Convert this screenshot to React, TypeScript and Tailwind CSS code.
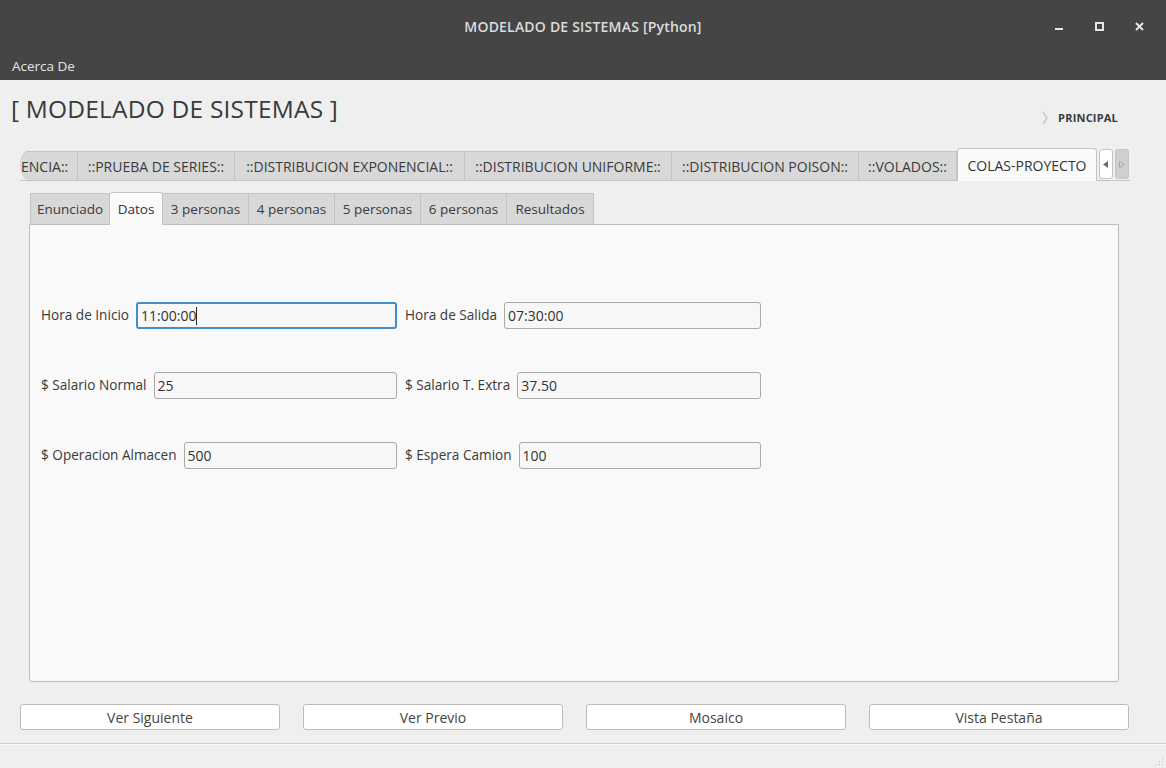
import React from 'react';

const outerTabs = [
  { label: '::PRUEBA DE SERIES::', w: 157 },
  { label: '::DISTRIBUCION EXPONENCIAL::', w: 230 },
  { label: '::DISTRIBUCION UNIFORME::', w: 207 },
  { label: '::DISTRIBUCION POISON::', w: 187 },
  { label: '::VOLADOS::', w: 98 },
];

const innerTabs = [
  { label: 'Enunciado', w: 80 },
  { label: 'Datos', w: 53, active: true },
  { label: '3 personas', w: 86 },
  { label: '4 personas', w: 86 },
  { label: '5 personas', w: 86 },
  { label: '6 personas', w: 86 },
  { label: 'Resultados', w: 87 },
];

const rows = [
  [
    { label: 'Hora de Inicio', value: '11:00:00', focus: true },
    { label: 'Hora de Salida', value: '07:30:00' },
  ],
  [
    { label: '$ Salario Normal', value: '25' },
    { label: '$ Salario T. Extra', value: '37.50' },
  ],
  [
    { label: '$ Operacion Almacen', value: '500' },
    { label: '$ Espera Camion', value: '100' },
  ],
];

const buttons = ['Ver Siguiente', 'Ver Previo', 'Mosaico', 'Vista Pestaña'];

const Field = ({ label, value, focus }: { label: string; value: string; focus?: boolean }) => (
  <div className="flex items-center gap-[7px] w-[356px]">
    <span className="text-[13.6px] text-[#3a3a3a] whitespace-nowrap">{label}</span>
    <div
      className={
        'flex-1 h-[27px] rounded-[3px] bg-[#f7f7f7] flex items-center pl-[3px] text-[14px] text-[#333] ' +
        (focus ? 'border-2 border-[#3d8ec9] pl-[2px]' : 'border border-[#a9a9a9]')
      }
    >
      <span>{value}</span>
      {focus && <span className="w-px h-[18px] bg-[#222]" />}
    </div>
  </div>
);

export default function App() {
  return (
    <div className="w-[1166px] h-[768px] flex flex-col bg-[#efefef] font-['Open_Sans','Noto_Sans',sans-serif] overflow-hidden">
      {/* title bar */}
      <div className="h-[50px] bg-[#454545] relative flex items-center justify-center pt-[3px]">
        <span className="text-[14px] font-semibold text-[#dcdcdc] tracking-[0.2px]">MODELADO DE SISTEMAS [Python]</span>
        <div className="absolute right-[22px] top-0 h-[50px] pt-[2px] flex items-center gap-[31px]">
          <svg width="9" height="9" viewBox="0 0 9 9"><rect x="0" y="6" width="8" height="2" fill="#e6e6e6" /></svg>
          <svg width="9" height="9" viewBox="0 0 9 9"><rect x="1" y="1" width="7" height="7" fill="none" stroke="#e6e6e6" strokeWidth="2" /></svg>
          <svg width="9" height="9" viewBox="0 0 9 9"><path d="M1 1 L8 8 M8 1 L1 8" stroke="#e6e6e6" strokeWidth="2" /></svg>
        </div>
      </div>
      {/* menu bar */}
      <div className="h-[30px] bg-[#454545] flex items-center px-[12px] pt-[3px] text-[13.5px] text-[#e6e6e6]">Acerca De</div>

      {/* header */}
      <div className="h-[69px] flex justify-between items-start pl-[11px] pr-[48px]">
        <h1 className="mt-[13px] text-[24.5px] leading-[32px] text-[#3a3a3a] tracking-[0.2px]">[ MODELADO DE SISTEMAS ]</h1>
        <div className="mt-[30px] flex items-center gap-[10px]">
          <svg width="6" height="14" viewBox="0 0 6 14"><path d="M1 1 L5 7 L1 13" fill="none" stroke="#bdbdbd" strokeWidth="1.2" /></svg>
          <span className="text-[11px] font-bold text-[#3a3a3a] tracking-[0.2px]">PRINCIPAL</span>
        </div>
      </div>

      {/* outer tab bar */}
      <div className="ml-[20px] w-[1110px] h-[32px] flex items-end border-b border-[#c4c4c4]">
        <div className="h-[29px] w-[58px] bg-[#d8d8d8] border-t border-r border-[#c4c4c4] rounded-l-[8px_15px] flex items-center pl-[1px] text-[14px] text-[#3a3a3a] overflow-hidden whitespace-nowrap">ENCIA::</div>
        {outerTabs.map((t) => (
          <div
            key={t.label}
            style={{ width: t.w }}
            className="h-[29px] bg-[#d8d8d8] border-t border-r border-[#c4c4c4] flex items-center justify-center text-[14px] text-[#3a3a3a] whitespace-nowrap"
          >
            {t.label}
          </div>
        ))}
        <div className="h-[33px] w-[140px] -mb-px bg-[#fafafa] border border-b-0 border-[#c4c4c4] rounded-t-[3px] flex items-center justify-center text-[14px] text-[#333] whitespace-nowrap">
          COLAS-PROYECTO
        </div>
        <div className="ml-[2px] mb-[1px] h-[30px] w-[14px] bg-white border border-[#c4c4c4] rounded-[3px] flex items-center justify-center">
          <svg width="6" height="7" viewBox="0 0 6 7"><path d="M5 0 L0 3.5 L5 7 Z" fill="#6a6a6a" /></svg>
        </div>
        <div className="ml-[2px] mb-[1px] h-[30px] w-[14px] bg-[#cfcfcf] border border-[#c4c4c4] rounded-[3px] flex items-center justify-center">
          <svg width="6" height="7" viewBox="0 0 6 7"><path d="M0.5 0.5 L5.5 3.5 L0.5 6.5 Z" fill="none" stroke="#a8a8a8" /></svg>
        </div>
      </div>

      {/* inner tabs + panel */}
      <div className="pl-[29px] pr-[47px] pt-[11px] flex flex-col">
        <div className="h-[32px] flex items-end pl-px">
          {innerTabs.map((t, i) => (
            <div
              key={t.label}
              style={{ width: t.w }}
              className={
                'flex items-center justify-center text-[13.5px] whitespace-nowrap border-t border-r border-[#c4c4c4] ' +
                (i === 0 ? 'border-l ' : '') +
                (t.active
                  ? 'h-[33px] -mb-px bg-[#fafafa] text-[#333] rounded-t-[3px] relative z-10'
                  : 'h-[31px] bg-[#d8d8d8] text-[#3a3a3a]')
              }
            >
              {t.label}
            </div>
          ))}
        </div>
        <div className="h-[458px] bg-[#f9f9f9] border border-[#bcbcbc] rounded-b-[3px] pl-[11px] pt-[77px] flex flex-col gap-[43px]">
          {rows.map((r, i) => (
            <div key={i} className="flex gap-[8px]">
              {r.map((f) => (
                <Field key={f.label} {...f} />
              ))}
            </div>
          ))}
        </div>
      </div>

      {/* buttons */}
      <div className="mt-[22px] px-[20px] flex gap-[23px]">
        {buttons.map((b) => (
          <button
            key={b}
            className="w-[260px] h-[26px] bg-white border border-[#bdbdbd] rounded-[3px] text-[14px] text-[#444] flex items-center justify-center"
          >
            {b}
          </button>
        ))}
      </div>

      {/* status bar */}
      <div className="mt-[13px] flex-1 border-t border-[#d0d0d0] shadow-[inset_0_1px_0_#fafafa] relative">
        <svg className="absolute right-[2px] bottom-[2px]" width="10" height="10" viewBox="0 0 10 10">
          {[
            [8, 2], [8, 5], [8, 8], [5, 5], [5, 8], [2, 8],
          ].map(([x, y], i) => (
            <rect key={i} x={x} y={y} width="1" height="1" fill="#bcbcbc" />
          ))}
        </svg>
      </div>
    </div>
  );
}
